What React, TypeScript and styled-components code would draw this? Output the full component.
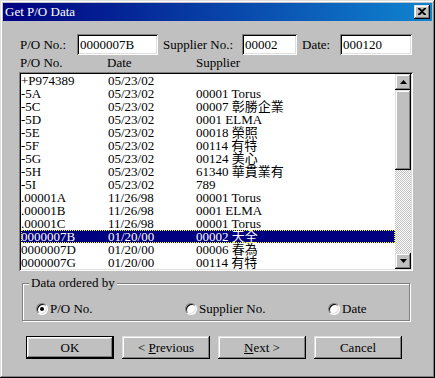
import React from "react";
import styled, { createGlobalStyle, css } from "styled-components";

const FONT = `"Liberation Serif", "Noto Sans CJK TC", serif`;

const rows: [string, string, string][] = [
    ["+P974389", "05/23/02", ""],
    ["-5A", "05/23/02", "00001 Torus"],
    ["-5C", "05/23/02", "00007 彰勝企業"],
    ["-5D", "05/23/02", "0001 ELMA"],
    ["-5E", "05/23/02", "00018 榮照"],
    ["-5F", "05/23/02", "00114 有特"],
    ["-5G", "05/23/02", "00124 美心"],
    ["-5H", "05/23/02", "61340 華貫業有"],
    ["-5I", "05/23/02", "789"],
    [".00001A", "11/26/98", "00001 Torus"],
    [".00001B", "11/26/98", "0001 ELMA"],
    [".00001C", "11/26/98", "00001 Torus"],
    ["0000007B", "01/20/00", "00002 天全"],
    ["0000007D", "01/20/00", "00006 春為"],
    ["0000007G", "01/20/00", "00114 有特"],
];

const selectedIndex = 12;

const App: React.FC = () => {
    return (
        <>
            <GlobalStyle />
            <Window>
                <TitleBar>
                    <TitleText>Get P/O Data</TitleText>
                    <CloseButton type="button">
                        <svg width="8" height="7" viewBox="0 0 8 7">
                            <path d="M0 0h2l2 2 2-2h2v1L5 3.5 8 6v1H6L4 5 2 7H0V6l3-2.5L0 1z" fill="#000" />
                        </svg>
                    </CloseButton>
                </TitleBar>
                <Body>
                    <FieldRow>
                        <Label $width={57}>P/O No.:</Label>
                        <Field $width={81}>0000007B</Field>
                        <Label $width={79} $gap={5}>Supplier No.:</Label>
                        <Field $width={55}>00002</Field>
                        <Label $width={38} $gap={5}>Date:</Label>
                        <Field $width={72}>000120</Field>
                    </FieldRow>
                    <ColumnHeader>
                        <span>P/O No.</span>
                        <span>Date</span>
                        <span>Supplier</span>
                    </ColumnHeader>
                    <ListBox>
                        <ListRows>
                            {rows.map((r, i) => (
                                <Row key={r[0]} $selected={i === selectedIndex}>
                                    <span>{r[0]}</span>
                                    <span>{r[1]}</span>
                                    <span>{r[2]}</span>
                                </Row>
                            ))}
                        </ListRows>
                        <ScrollBar>
                            <ScrollButton>
                                <svg width="7" height="4" viewBox="0 0 7 4">
                                    <path d="M3.5 0L7 4H0z" fill="#000" />
                                </svg>
                            </ScrollButton>
                            <Thumb />
                            <Track />
                            <ScrollButton>
                                <svg width="7" height="4" viewBox="0 0 7 4">
                                    <path d="M0 0h7L3.5 4z" fill="#000" />
                                </svg>
                            </ScrollButton>
                        </ScrollBar>
                    </ListBox>
                    <GroupBox>
                        <Legend>Data ordered by</Legend>
                        <RadioRow>
                            <RadioItem $width={149}>
                                <RadioCircle $checked />
                                P/O No.
                            </RadioItem>
                            <RadioItem $width={143}>
                                <RadioCircle />
                                Supplier No.
                            </RadioItem>
                            <RadioItem>
                                <RadioCircle />
                                Date
                            </RadioItem>
                        </RadioRow>
                    </GroupBox>
                    <ButtonRow>
                        <DialogButton type="button" $default>OK</DialogButton>
                        <DialogButton type="button">&lt; <u>P</u>revious</DialogButton>
                        <DialogButton type="button"><u>N</u>ext &gt;</DialogButton>
                        <DialogButton type="button">Cancel</DialogButton>
                    </ButtonRow>
                </Body>
            </Window>
        </>
    );
};

const raised = css`
    background: #c0c0c0;
    box-shadow: inset -1px -1px 0 #000, inset 1px 1px 0 #dfdfdf,
        inset -2px -2px 0 #808080, inset 2px 2px 0 #fff;
`;

const sunken = css`
    box-shadow: inset 1px 1px 0 #808080, inset -1px -1px 0 #fff,
        inset 2px 2px 0 #000, inset -2px -2px 0 #dfdfdf;
`;

const GlobalStyle = createGlobalStyle`
    body {
        margin: 0;
        background: #c0c0c0;
        font-family: ${FONT};
        font-size: 13px;
        color: #000;
    }
    * {
        box-sizing: border-box;
    }
`;

const Window = styled.div`
    width: 435px;
    height: 378px;
    padding: 3px;
    display: flex;
    flex-direction: column;
    background: #c0c0c0;
    box-shadow: inset -1px -1px 0 #000, inset 1px 1px 0 #dfdfdf,
        inset -2px -2px 0 #808080, inset 2px 2px 0 #fff;
`;

const TitleBar = styled.div`
    height: 18px;
    display: flex;
    align-items: center;
    padding: 0 2px;
    background: linear-gradient(90deg, #000080, #1084d0);
`;

const TitleText = styled.span`
    flex: 1;
    color: #fff;
    font-size: 13px;
    line-height: 18px;
`;

const CloseButton = styled.button`
    ${raised};
    width: 16px;
    height: 14px;
    padding: 0 0 1px;
    border: none;
    display: flex;
    align-items: center;
    justify-content: center;
`;

const Body = styled.div`
    padding: 13px 0 0 16px;
    display: flex;
    flex-direction: column;
`;

const FieldRow = styled.div`
    display: flex;
    align-items: center;
    height: 21px;
    padding-left: 1px;
`;

const Label = styled.span<{ $width: number; $gap?: number }>`
    width: ${(p) => p.$width}px;
    margin-left: ${(p) => p.$gap ?? 0}px;
    white-space: nowrap;
`;

const Field = styled.div<{ $width: number }>`
    ${sunken};
    width: ${(p) => p.$width}px;
    height: 21px;
    padding: 0 3px;
    background: #fff;
    line-height: 21px;
`;

const ColumnHeader = styled.div`
    display: grid;
    grid-template-columns: 87px 89px 1fr;
    height: 17px;
    padding: 1px 0 0 1px;
    line-height: 13px;
`;

const ListBox = styled.div`
    ${sunken};
    width: 394px;
    height: 199px;
    padding: 2px;
    display: flex;
    background: #fff;
`;

const ListRows = styled.div`
    flex: 1;
    overflow: hidden;
    display: flex;
    flex-direction: column;
`;

const Row = styled.div<{ $selected?: boolean }>`
    display: grid;
    grid-template-columns: 87px 88px 1fr;
    flex: none;
    height: 13px;
    line-height: 13px;
    white-space: nowrap;
    overflow: hidden;
    ${(p) =>
        p.$selected &&
        css`
            background: #000080;
            color: #fff;
            outline: 1px dotted #ffff00;
            outline-offset: -1px;
        `}
`;

const ScrollBar = styled.div`
    width: 16px;
    display: flex;
    flex-direction: column;
`;

const ScrollButton = styled.div`
    ${raised};
    height: 16px;
    flex: none;
    display: flex;
    align-items: center;
    justify-content: center;
`;

const Thumb = styled.div`
    ${raised};
    height: 80px;
    flex: none;
`;

const Track = styled.div`
    flex: 1;
    background: repeating-conic-gradient(#c0c0c0 0 25%, #fff 0 50%) 0 0 / 2px 2px;
`;

const GroupBox = styled.div`
    position: relative;
    width: 388px;
    height: 38px;
    margin: 12px 0 0 3px;
    border: 1px solid #808080;
    box-shadow: inset 1px 1px 0 #fff, 1px 1px 0 #fff;
`;

const Legend = styled.span`
    position: absolute;
    top: -8px;
    left: 6px;
    padding: 0 2px;
    line-height: 14px;
    background: #c0c0c0;
`;

const RadioRow = styled.div`
    display: flex;
    align-items: center;
    padding: 13px 0 0 13px;
    height: 100%;
    line-height: 13px;
`;

const RadioItem = styled.label<{ $width?: number }>`
    display: flex;
    align-items: center;
    ${(p) => p.$width && `width: ${p.$width}px;`}
    white-space: nowrap;
    height: 13px;
`;

const RadioCircle = styled.span<{ $checked?: boolean }>`
    position: relative;
    width: 12px;
    height: 12px;
    margin-right: 2px;
    border-radius: 50%;
    background: #fff;
    border: 1px solid;
    border-color: #808080 #fff #fff #808080;
    box-shadow: inset 1px 1px 0 #000, inset -1px -1px 0 #dfdfdf;

    &::after {
        content: "";
        display: ${(p) => (p.$checked ? "block" : "none")};
        position: absolute;
        left: 3px;
        top: 3px;
        width: 4px;
        height: 4px;
        border-radius: 50%;
        background: #000;
    }
`;

const ButtonRow = styled.div`
    display: flex;
    gap: 8px;
    margin: 15px 0 0 7px;
`;

const DialogButton = styled.button<{ $default?: boolean }>`
    ${raised};
    width: 88px;
    height: 23px;
    border: none;
    padding: 0;
    font-family: ${FONT};
    font-size: 13px;
    color: #000;
    ${(p) =>
        p.$default &&
        css`
            box-shadow: inset 0 0 0 1px #000, inset -2px -2px 0 #000,
                inset 2px 2px 0 #fff, inset -3px -3px 0 #808080,
                inset 3px 3px 0 #dfdfdf;
        `}

    u {
        text-decoration-thickness: 1px;
        text-underline-offset: 1px;
    }
`;

export default App;
